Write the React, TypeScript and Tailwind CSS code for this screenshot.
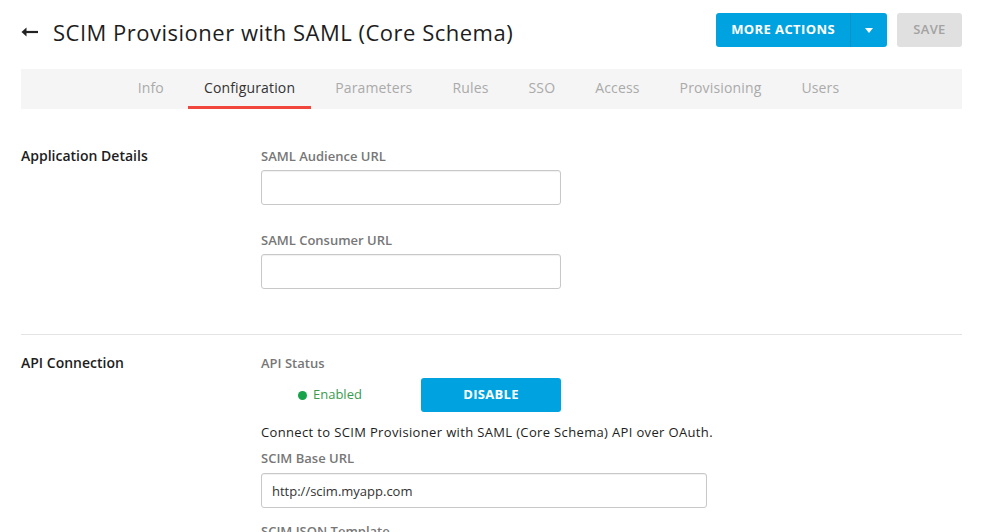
import React from "react";

const tabs = ["Info", "Configuration", "Parameters", "Rules", "SSO", "Access", "Provisioning", "Users"];

function FieldLabel({ children }: { children: React.ReactNode }) {
  return <div className="text-[13px] leading-[16px] font-semibold text-[#777]">{children}</div>;
}

function TextInput({ value = "", wide = false }: { value?: string; wide?: boolean }) {
  return (
    <input
      readOnly
      value={value}
      className={`h-[35px] rounded-[3px] border border-[#c8c8c8] bg-white px-[10px] text-[13px] text-[#333] shadow-[inset_0_1px_1px_rgba(0,0,0,0.06)] outline-none ${
        wide ? "w-[446px]" : "w-[300px]"
      }`}
    />
  );
}

export default function App() {
  return (
    <div className="min-h-[532px] bg-white font-['Open_Sans',sans-serif] text-[#1d1d21]">
      <div className="px-[21px]">
        {/* header */}
        <div className="flex h-[60px] items-center justify-between">
          <div className="mt-[3px] flex items-center">
            <svg width="17" height="10" viewBox="0 0 17 10" className="mr-[15px]">
              <path d="M17 5H3" stroke="#222" strokeWidth="2.2" />
              <path d="M5.5 0.5L0.5 5l5 4.5z" fill="#222" />
            </svg>
            <h1 className="text-[22px] leading-[28px] font-normal tracking-[0.5px] text-[#1d1d21]">
              SCIM Provisioner with SAML (Core Schema)
            </h1>
          </div>
          <div className="flex items-center gap-[10px]">
            <div className="flex h-[34px] overflow-hidden rounded-[3px] bg-[#00a3df] text-white">
              <button className="px-[15px] text-[13px] font-bold tracking-[0.4px]">MORE ACTIONS</button>
              <button className="flex w-[37px] items-center justify-center border-l border-[#0892c6]">
                <svg width="8" height="5" viewBox="0 0 8 5">
                  <path d="M0 0h8L4 5z" fill="white" />
                </svg>
              </button>
            </div>
            <button className="h-[34px] w-[65px] rounded-[3px] bg-[#e0e0e0] text-[13px] font-semibold tracking-[0.3px] text-[#a3a3a3]">
              SAVE
            </button>
          </div>
        </div>

        {/* tabs */}
        <div className="mt-[9px] flex h-[40px] justify-center gap-2 bg-[#f5f5f5] pr-[6px]">
          {tabs.map((t) => (
            <div
              key={t}
              className={`flex items-center border-b-[3px] px-4 text-[14px] tracking-[0.15px] ${
                t === "Configuration" ? "border-[#f0463c] text-[#333]" : "border-transparent text-[#aaa]"
              }`}
            >
              {t}
            </div>
          ))}
        </div>

        {/* application details */}
        <div className="flex border-b border-[#e3e3e3] pt-[39px] pb-[45px]">
          <div className="w-[240px] text-[14px] leading-[16px] font-semibold text-[#1d1d21]">Application Details</div>
          <div className="flex flex-col">
            <FieldLabel>SAML Audience URL</FieldLabel>
            <div className="mt-[6px]">
              <TextInput />
            </div>
            <div className="mt-[27px]">
              <FieldLabel>SAML Consumer URL</FieldLabel>
            </div>
            <div className="mt-[6px]">
              <TextInput />
            </div>
          </div>
        </div>

        {/* api connection */}
        <div className="flex pt-[20px]">
          <div className="w-[240px] text-[14px] leading-[16px] font-semibold text-[#1d1d21]">API Connection</div>
          <div className="flex flex-col">
            <FieldLabel>API Status</FieldLabel>
            <div className="mt-[7px] flex items-center">
              <div className="flex w-[160px] items-center pl-[37px] text-[13px] text-[#3a9b4e]">
                <span className="mr-[6px] inline-block h-[9px] w-[9px] rounded-full bg-[#16a34a]" />
                Enabled
              </div>
              <button className="h-[34px] w-[140px] rounded-[3px] bg-[#00a3df] text-[13px] font-bold tracking-[0.3px] text-white">
                DISABLE
              </button>
            </div>
            <div className="mt-[12px] text-[13px] leading-[16px] tracking-[0.35px] text-[#1d1d21]">
              Connect to SCIM Provisioner with SAML (Core Schema) API over OAuth.
            </div>
            <div className="mt-[10px]">
              <FieldLabel>SCIM Base URL</FieldLabel>
            </div>
            <div className="mt-[7px]">
              <TextInput value="http://scim.myapp.com" wide />
            </div>
            <div className="mt-[15px]">
              <FieldLabel>SCIM JSON Template</FieldLabel>
            </div>
          </div>
        </div>
      </div>
    </div>
  );
}
